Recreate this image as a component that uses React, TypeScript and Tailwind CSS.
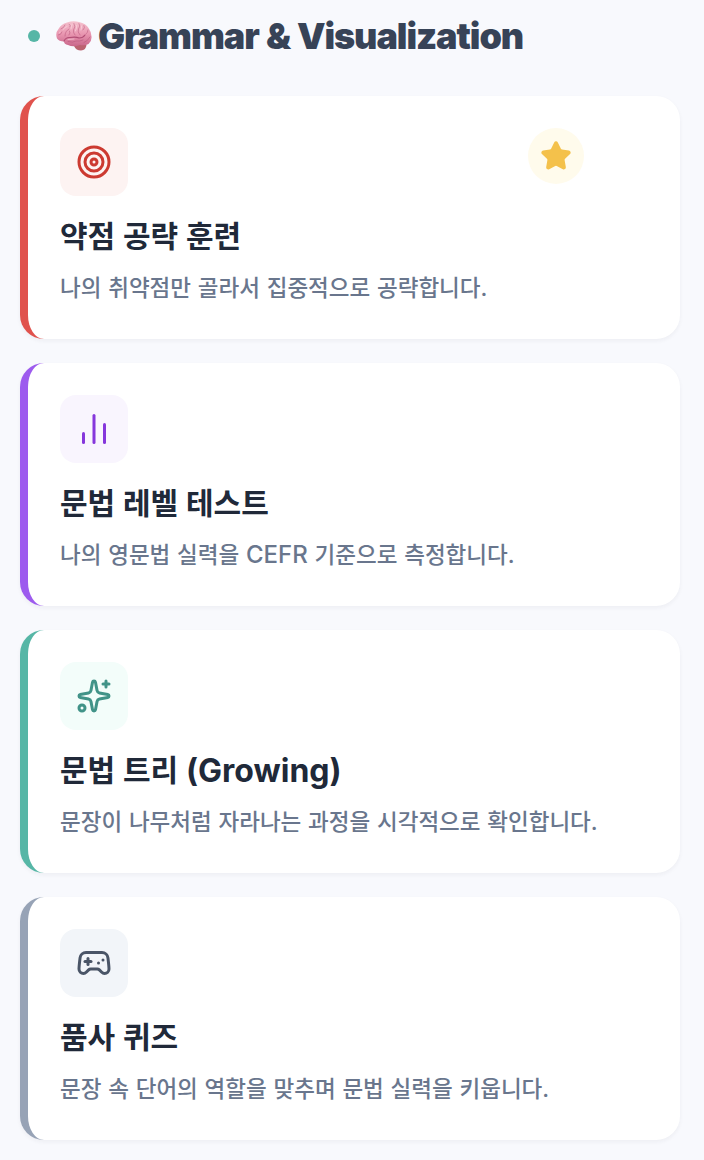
import { ChartNoAxesColumn, Gamepad2, Sparkles, Star, Target } from "lucide-react";

const cards = [
  {
    title: "약점 공략 훈련",
    desc: "나의 취약점만 골라서 집중적으로 공략합니다.",
    icon: Target,
    border: "border-l-[#e0524d]",
    tile: "bg-[#fdf3f2] text-[#cc3a31]",
    starred: true,
  },
  {
    title: "문법 레벨 테스트",
    desc: (
      <>
        나의 영문법 실력을 <span className="text-[24px]">CEFR</span> 기준으로 측정합니다.
      </>
    ),
    icon: ChartNoAxesColumn,
    border: "border-l-[#9d5bee]",
    tile: "bg-[#f9f5fe] text-[#8637dc]",
    starred: false,
  },
  {
    title: (
      <>
        문법 트리 <span className="relative top-px text-[32px]">(Growing)</span>
      </>
    ),
    desc: "문장이 나무처럼 자라나는 과정을 시각적으로 확인합니다.",
    icon: Sparkles,
    border: "border-l-[#56b6a6]",
    tile: "bg-[#f3fdfa] text-[#419388]",
    starred: false,
  },
  {
    title: "품사 퀴즈",
    desc: "문장 속 단어의 역할을 맞추며 문법 실력을 키웁니다.",
    icon: Gamepad2,
    border: "border-l-[#97a3b6]",
    tile: "bg-[#f2f5f9] text-[#4a5567]",
    starred: false,
  },
];

function Brain() {
  return (
    <svg viewBox="0 0 36 30" className="h-[30px] w-9 shrink-0" fill="none">
      <defs>
        <linearGradient id="lobe" x1="0" y1="0" x2="0" y2="1">
          <stop offset="0" stopColor="#f5c3cf" />
          <stop offset="0.5" stopColor="#e997b1" />
          <stop offset="1" stopColor="#c9668a" />
        </linearGradient>
      </defs>
      {/* cerebellum */}
      <path d="M18 25 Q20 29.500 25 29.500 Q30 29 30.500 24 L20 22Z" fill="#bb6270" />
      {/* hemisphere */}
      <path
        d="M1 17.500 Q-1 12 2.500 8 Q5 3 11 1.500 Q17 -.5 23 1 Q30 2.500 32.500 7 Q35.500 11 35.500 15.500 Q36 20 32.500 23 Q29 25 24 24 Q17 26.500 12 24 Q8 23 8 20.500 Q3 20.500 1 17.500Z"
        fill="url(#lobe)"
      />
      <g stroke="#b04d74" strokeLinecap="round">
        <path d="M8 20 Q10 16 14 16.500 Q20 15.500 23 17 Q27 17 29 14" strokeWidth="1.1" />
        <g strokeWidth="0.8" strokeOpacity="0.6">
          <path d="M2.500 14 Q5 14 6 11 M5 8 Q8 7 9 4 M9 15 Q9 10 13 8 M13 14 Q15 12 13.500 10 M13 3 Q15 4 14 6" />
          <path d="M18 2.500 Q20 6 17.500 9 Q17 12 19 14 M23 2.500 Q25 5 22.500 8 Q21 11 24 14 M28 4.500 Q29.500 7 27 9" />
          <path d="M32 9 Q32 12 30 13 M12 20.500 Q17 22 20 20 Q24 20.500 27 19 M34 16 Q32 20 28 21.500" />
        </g>
      </g>
      <g stroke="#fde0e7" strokeWidth="0.8" strokeLinecap="round" strokeOpacity="0.7">
        <path d="M7 8.500 Q9 6 11 5.500 M16 3.500 Q15 6 15 8 M20.500 4.500 Q21 7 19.500 10 M25.500 5 Q26 7 25 9 M4 11 L3.500 12 M12 18.500 L18 18" />
      </g>
    </svg>
  );
}

export default function App() {
  return (
    <div className="h-[1160px] overflow-hidden bg-[#f8f9fd] px-5 pt-[11px] font-['Inter','Noto_Sans_CJK_KR',sans-serif]">
      <h2 className="mb-[35px] flex h-[50px] items-center pl-2 text-[36px] leading-[50px] font-black tracking-[-0.03em] text-[#374357] [word-spacing:1px]">
        <span className="mr-4 size-3 shrink-0 rounded-full bg-[#56b6a6]" />
        <Brain />
        <span className="ml-1.5 whitespace-nowrap">Grammar &amp; Visualization</span>
      </h2>

      <div className="flex w-[660px] flex-col gap-6">
        {cards.map((card, i) => (
          <div
            key={i}
            className={`relative h-[243px] rounded-3xl border-l-8 bg-white p-8 shadow-[0_2px_4px_rgba(30,41,59,0.05)] ${card.border}`}
          >
            <div className={`flex size-[68px] items-center justify-center rounded-2xl ${card.tile}`}>
              <card.icon size={36} />
            </div>
            <h3 className="mt-5 h-10 text-[30px] leading-10 font-bold whitespace-nowrap text-[#202939] [word-spacing:0.7px]">
              {card.title}
            </h3>
            <p className="mt-4 h-8 text-[22.5px] leading-8 font-medium whitespace-nowrap text-[#69768d] [word-spacing:0.8px]">
              {card.desc}
            </p>
            {card.starred && (
              <div className="absolute top-8 right-24 flex size-14 items-center justify-center rounded-full bg-[#fffbec] text-[#f4c14b]">
                <Star size={32} fill="currentColor" />
              </div>
            )}
          </div>
        ))}
      </div>
    </div>
  );
}
